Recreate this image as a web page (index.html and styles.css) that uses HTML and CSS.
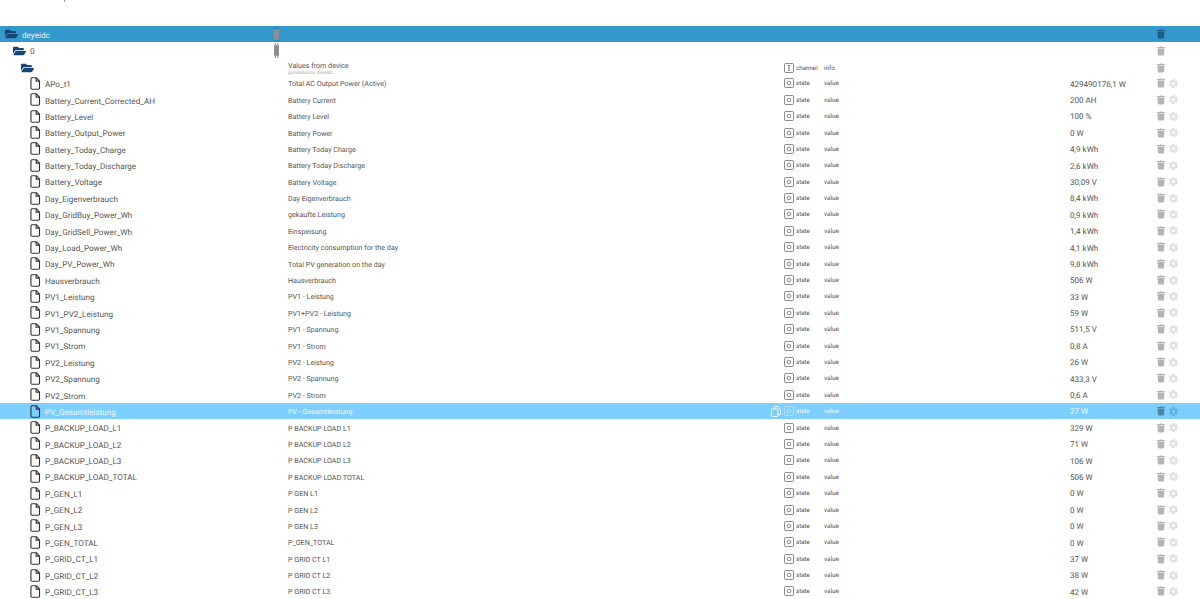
FILE: index.html
```html
<!DOCTYPE html>
<html lang="de">
<head>
<meta charset="utf-8">
<title>deyeidc objects</title>
<link rel="stylesheet" href="styles.css">
</head>
<body>
<svg class="defs" aria-hidden="true">
<symbol id="folder" viewBox="0 0 576 512"><path d="M572.694 292.093L500.27 416.248A63.997 63.997 0 0 1 444.989 448H45.025c-18.523 0-30.064-20.093-20.731-36.093l72.424-124.155A64 64 0 0 1 152 256h399.964c18.523 0 30.064 20.093 20.73 36.093zM152 224h328v-48c0-26.51-21.49-48-48-48H272l-64-64H48C21.49 64 0 85.49 0 112v278.046l69.077-118.418C86.214 242.25 117.989 224 152 224z"/></symbol>
<symbol id="file" viewBox="0 0 11 14"><path d="M1.800 .8h4.700L9.800 4.200V12a1.200 1.200 0 0 1-1.200 1.200H1.800A1.200 1.200 0 0 1 .6 12V2A1.200 1.200 0 0 1 1.800 .8zM6.200 1v3.400h3.400" fill="none" stroke="currentColor" stroke-width="1.200"/></symbol>
<symbol id="trash" viewBox="0 0 448 512"><path d="M432 32H312l-9.400-18.700A24 24 0 0 0 281.100 0H166.800a23.720 23.720 0 0 0-21.400 13.300L136 32H16A16 16 0 0 0 0 48v32a16 16 0 0 0 16 16h416a16 16 0 0 0 16-16V48a16 16 0 0 0-16-16zM53.200 467a48 48 0 0 0 47.900 45h245.800a48 48 0 0 0 47.900-45L416 128H32z"/></symbol>
<symbol id="gear" viewBox="0 0 24 24"><path fill-rule="evenodd" d="M19.400 13a7.600 7.600 0 0 0 0-2l2.100-1.600c.2-.2.2-.4.1-.6l-2-3.500c-.1-.2-.4-.3-.6-.2l-2.500 1a7.300 7.300 0 0 0-1.700-1l-.4-2.600a.5.5 0 0 0-.5-.4h-4a.5.5 0 0 0-.5.4l-.4 2.600c-.6.3-1.200.6-1.700 1l-2.500-1c-.2-.1-.5 0-.6.2l-2 3.500c-.1.2-.1.4.1.6L4.600 11a7.600 7.600 0 0 0 0 2l-2.100 1.600c-.2.2-.2.4-.1.6l2 3.500c.1.2.4.3.6.2l2.500-1c.5.4 1.100.7 1.700 1l.4 2.600c0 .2.3.4.5.4h4c.2 0 .5-.2.5-.4l.4-2.600c.6-.3 1.200-.6 1.700-1l2.500 1c.2.1.5 0 .6-.2l2-3.500c.1-.2.1-.4-.1-.6zM12 8.500a3.500 3.500 0 1 1 0 7 3.500 3.500 0 0 1 0-7z"/></symbol>
<symbol id="state" viewBox="0 0 11 11"><rect x=".5" y=".5" width="10" height="10" rx="1.500" fill="none" stroke="currentColor"/><circle cx="5.500" cy="5.500" r="2" fill="none" stroke="currentColor"/></symbol>
<symbol id="channel" viewBox="0 0 11 11"><rect x=".5" y=".5" width="10" height="10" rx="1.500" fill="none" stroke="currentColor"/><path d="M4.300 2.200h2.400v1.600H4.300zM4.800 4.600h1.400v4.200H4.800z" fill="currentColor"/></symbol>
<symbol id="pin" viewBox="0 0 7 15"><path d="M1 2.200h5v10.600H1z" fill="#8c9094"/><path d="M1.800 0h.7v2.200h-.7zM4.500 0h.7v2.200h-.7zM1.800 12.800h.7V15h-.7zM4.500 12.800h.7V15h-.7z" fill="#54585c"/></symbol>
<symbol id="copy" viewBox="0 0 11 12"><path d="M3.500 3V1.500a1 1 0 0 1 1-1h3L10.500 3.500V8.500a1 1 0 0 1-1 1H7.500M1.500 3H6.500a1 1 0 0 1 1 1V10.500a1 1 0 0 1-1 1H1.500a1 1 0 0 1-1-1V4a1 1 0 0 1 1-1z" fill="none" stroke="currentColor"/></symbol>
</svg>

<div class="topbar"><span class="speck"></span></div>

<main class="tree">
<div class="row root"><div class="name l0"><svg class="ic-folder"><use href="#folder"/></svg><span>deyeidc</span></div><svg class="ic-pin"><use href="#pin"/></svg><div class="desc"></div><div class="copy"></div><div class="type"></div><div class="role"></div><div class="val"></div><div class="acts"><svg class="ic-trash"><use href="#trash"/></svg></div></div>
<div class="row"><div class="name l1"><svg class="ic-folder"><use href="#folder"/></svg><span>0</span></div><svg class="ic-pin"><use href="#pin"/></svg><div class="desc"></div><div class="copy"></div><div class="type"></div><div class="role"></div><div class="val"></div><div class="acts"><svg class="ic-trash"><use href="#trash"/></svg></div></div>
<div class="row"><div class="name l2"><svg class="ic-folder"><use href="#folder"/></svg></div><span class="pin-gap"></span><div class="desc twoline"><span class="desc-main">Values from device</span><span class="desc-sub">generated by deyeidc</span></div><div class="copy"></div><div class="type"><svg class="ic-type"><use href="#channel"/></svg>channel</div><div class="role">info</div><div class="val"></div><div class="acts"><svg class="ic-trash"><use href="#trash"/></svg></div></div>

<div class="row"><div class="name"><svg class="ic-file"><use href="#file"/></svg><span>APo_t1</span></div><span class="pin-gap"></span><div class="desc">Total AC Output Power (Active)</div><div class="copy"></div><div class="type"><svg class="ic-type"><use href="#state"/></svg>state</div><div class="role">value</div><div class="val">429490176,1 W</div><div class="acts"><svg class="ic-trash"><use href="#trash"/></svg><svg class="ic-gear"><use href="#gear"/></svg></div></div>
<div class="row"><div class="name"><svg class="ic-file"><use href="#file"/></svg><span>Battery_Current_Corrected_AH</span></div><span class="pin-gap"></span><div class="desc">Battery Current</div><div class="copy"></div><div class="type"><svg class="ic-type"><use href="#state"/></svg>state</div><div class="role">value</div><div class="val">200 AH</div><div class="acts"><svg class="ic-trash"><use href="#trash"/></svg><svg class="ic-gear"><use href="#gear"/></svg></div></div>
<div class="row"><div class="name"><svg class="ic-file"><use href="#file"/></svg><span>Battery_Level</span></div><span class="pin-gap"></span><div class="desc">Battery Level</div><div class="copy"></div><div class="type"><svg class="ic-type"><use href="#state"/></svg>state</div><div class="role">value</div><div class="val">100 %</div><div class="acts"><svg class="ic-trash"><use href="#trash"/></svg><svg class="ic-gear"><use href="#gear"/></svg></div></div>
<div class="row"><div class="name"><svg class="ic-file"><use href="#file"/></svg><span>Battery_Output_Power</span></div><span class="pin-gap"></span><div class="desc">Battery Power</div><div class="copy"></div><div class="type"><svg class="ic-type"><use href="#state"/></svg>state</div><div class="role">value</div><div class="val">0 W</div><div class="acts"><svg class="ic-trash"><use href="#trash"/></svg><svg class="ic-gear"><use href="#gear"/></svg></div></div>
<div class="row"><div class="name"><svg class="ic-file"><use href="#file"/></svg><span>Battery_Today_Charge</span></div><span class="pin-gap"></span><div class="desc">Battery Today Charge</div><div class="copy"></div><div class="type"><svg class="ic-type"><use href="#state"/></svg>state</div><div class="role">value</div><div class="val">4,9 kWh</div><div class="acts"><svg class="ic-trash"><use href="#trash"/></svg><svg class="ic-gear"><use href="#gear"/></svg></div></div>
<div class="row"><div class="name"><svg class="ic-file"><use href="#file"/></svg><span>Battery_Today_Discharge</span></div><span class="pin-gap"></span><div class="desc">Battery Today Discharge</div><div class="copy"></div><div class="type"><svg class="ic-type"><use href="#state"/></svg>state</div><div class="role">value</div><div class="val">2,6 kWh</div><div class="acts"><svg class="ic-trash"><use href="#trash"/></svg><svg class="ic-gear"><use href="#gear"/></svg></div></div>
<div class="row"><div class="name"><svg class="ic-file"><use href="#file"/></svg><span>Battery_Voltage</span></div><span class="pin-gap"></span><div class="desc">Battery Voltage</div><div class="copy"></div><div class="type"><svg class="ic-type"><use href="#state"/></svg>state</div><div class="role">value</div><div class="val">30,09 V</div><div class="acts"><svg class="ic-trash"><use href="#trash"/></svg><svg class="ic-gear"><use href="#gear"/></svg></div></div>
<div class="row"><div class="name"><svg class="ic-file"><use href="#file"/></svg><span>Day_Eigenverbrauch</span></div><span class="pin-gap"></span><div class="desc">Day Eigenverbrauch</div><div class="copy"></div><div class="type"><svg class="ic-type"><use href="#state"/></svg>state</div><div class="role">value</div><div class="val">8,4 kWh</div><div class="acts"><svg class="ic-trash"><use href="#trash"/></svg><svg class="ic-gear"><use href="#gear"/></svg></div></div>
<div class="row"><div class="name"><svg class="ic-file"><use href="#file"/></svg><span>Day_GridBuy_Power_Wh</span></div><span class="pin-gap"></span><div class="desc">gekaufte Leistung</div><div class="copy"></div><div class="type"><svg class="ic-type"><use href="#state"/></svg>state</div><div class="role">value</div><div class="val">0,9 kWh</div><div class="acts"><svg class="ic-trash"><use href="#trash"/></svg><svg class="ic-gear"><use href="#gear"/></svg></div></div>
<div class="row"><div class="name"><svg class="ic-file"><use href="#file"/></svg><span>Day_GridSell_Power_Wh</span></div><span class="pin-gap"></span><div class="desc">Einspeisung</div><div class="copy"></div><div class="type"><svg class="ic-type"><use href="#state"/></svg>state</div><div class="role">value</div><div class="val">1,4 kWh</div><div class="acts"><svg class="ic-trash"><use href="#trash"/></svg><svg class="ic-gear"><use href="#gear"/></svg></div></div>
<div class="row"><div class="name"><svg class="ic-file"><use href="#file"/></svg><span>Day_Load_Power_Wh</span></div><span class="pin-gap"></span><div class="desc">Electricity consumption for the day</div><div class="copy"></div><div class="type"><svg class="ic-type"><use href="#state"/></svg>state</div><div class="role">value</div><div class="val">4,1 kWh</div><div class="acts"><svg class="ic-trash"><use href="#trash"/></svg><svg class="ic-gear"><use href="#gear"/></svg></div></div>
<div class="row"><div class="name"><svg class="ic-file"><use href="#file"/></svg><span>Day_PV_Power_Wh</span></div><span class="pin-gap"></span><div class="desc">Total PV generation on the day</div><div class="copy"></div><div class="type"><svg class="ic-type"><use href="#state"/></svg>state</div><div class="role">value</div><div class="val">9,8 kWh</div><div class="acts"><svg class="ic-trash"><use href="#trash"/></svg><svg class="ic-gear"><use href="#gear"/></svg></div></div>
<div class="row"><div class="name"><svg class="ic-file"><use href="#file"/></svg><span>Hausverbrauch</span></div><span class="pin-gap"></span><div class="desc">Hausverbrauch</div><div class="copy"></div><div class="type"><svg class="ic-type"><use href="#state"/></svg>state</div><div class="role">value</div><div class="val">506 W</div><div class="acts"><svg class="ic-trash"><use href="#trash"/></svg><svg class="ic-gear"><use href="#gear"/></svg></div></div>
<div class="row"><div class="name"><svg class="ic-file"><use href="#file"/></svg><span>PV1_Leistung</span></div><span class="pin-gap"></span><div class="desc">PV1 - Leistung</div><div class="copy"></div><div class="type"><svg class="ic-type"><use href="#state"/></svg>state</div><div class="role">value</div><div class="val">33 W</div><div class="acts"><svg class="ic-trash"><use href="#trash"/></svg><svg class="ic-gear"><use href="#gear"/></svg></div></div>
<div class="row"><div class="name"><svg class="ic-file"><use href="#file"/></svg><span>PV1_PV2_Leistung</span></div><span class="pin-gap"></span><div class="desc">PV1+PV2 - Leistung</div><div class="copy"></div><div class="type"><svg class="ic-type"><use href="#state"/></svg>state</div><div class="role">value</div><div class="val">59 W</div><div class="acts"><svg class="ic-trash"><use href="#trash"/></svg><svg class="ic-gear"><use href="#gear"/></svg></div></div>
<div class="row"><div class="name"><svg class="ic-file"><use href="#file"/></svg><span>PV1_Spannung</span></div><span class="pin-gap"></span><div class="desc">PV1 - Spannung</div><div class="copy"></div><div class="type"><svg class="ic-type"><use href="#state"/></svg>state</div><div class="role">value</div><div class="val">511,5 V</div><div class="acts"><svg class="ic-trash"><use href="#trash"/></svg><svg class="ic-gear"><use href="#gear"/></svg></div></div>
<div class="row"><div class="name"><svg class="ic-file"><use href="#file"/></svg><span>PV1_Strom</span></div><span class="pin-gap"></span><div class="desc">PV1 - Strom</div><div class="copy"></div><div class="type"><svg class="ic-type"><use href="#state"/></svg>state</div><div class="role">value</div><div class="val">0,8 A</div><div class="acts"><svg class="ic-trash"><use href="#trash"/></svg><svg class="ic-gear"><use href="#gear"/></svg></div></div>
<div class="row"><div class="name"><svg class="ic-file"><use href="#file"/></svg><span>PV2_Leistung</span></div><span class="pin-gap"></span><div class="desc">PV2 - Leistung</div><div class="copy"></div><div class="type"><svg class="ic-type"><use href="#state"/></svg>state</div><div class="role">value</div><div class="val">26 W</div><div class="acts"><svg class="ic-trash"><use href="#trash"/></svg><svg class="ic-gear"><use href="#gear"/></svg></div></div>
<div class="row"><div class="name"><svg class="ic-file"><use href="#file"/></svg><span>PV2_Spannung</span></div><span class="pin-gap"></span><div class="desc">PV2 - Spannung</div><div class="copy"></div><div class="type"><svg class="ic-type"><use href="#state"/></svg>state</div><div class="role">value</div><div class="val">433,3 V</div><div class="acts"><svg class="ic-trash"><use href="#trash"/></svg><svg class="ic-gear"><use href="#gear"/></svg></div></div>
<div class="row"><div class="name"><svg class="ic-file"><use href="#file"/></svg><span>PV2_Strom</span></div><span class="pin-gap"></span><div class="desc">PV2 - Strom</div><div class="copy"></div><div class="type"><svg class="ic-type"><use href="#state"/></svg>state</div><div class="role">value</div><div class="val">0,6 A</div><div class="acts"><svg class="ic-trash"><use href="#trash"/></svg><svg class="ic-gear"><use href="#gear"/></svg></div></div>
<div class="row hover"><div class="name"><svg class="ic-file"><use href="#file"/></svg><span>PV_Gesamtleistung</span></div><span class="pin-gap"></span><div class="desc">PV - Gesamtleistung</div><div class="copy"><svg class="ic-copy"><use href="#copy"/></svg></div><div class="type"><svg class="ic-type"><use href="#state"/></svg>state</div><div class="role">value</div><div class="val">27 W</div><div class="acts"><svg class="ic-trash"><use href="#trash"/></svg><svg class="ic-gear"><use href="#gear"/></svg></div></div>
<div class="row"><div class="name"><svg class="ic-file"><use href="#file"/></svg><span>P_BACKUP_LOAD_L1</span></div><span class="pin-gap"></span><div class="desc">P BACKUP LOAD L1</div><div class="copy"></div><div class="type"><svg class="ic-type"><use href="#state"/></svg>state</div><div class="role">value</div><div class="val">329 W</div><div class="acts"><svg class="ic-trash"><use href="#trash"/></svg><svg class="ic-gear"><use href="#gear"/></svg></div></div>
<div class="row"><div class="name"><svg class="ic-file"><use href="#file"/></svg><span>P_BACKUP_LOAD_L2</span></div><span class="pin-gap"></span><div class="desc">P BACKUP LOAD L2</div><div class="copy"></div><div class="type"><svg class="ic-type"><use href="#state"/></svg>state</div><div class="role">value</div><div class="val">71 W</div><div class="acts"><svg class="ic-trash"><use href="#trash"/></svg><svg class="ic-gear"><use href="#gear"/></svg></div></div>
<div class="row"><div class="name"><svg class="ic-file"><use href="#file"/></svg><span>P_BACKUP_LOAD_L3</span></div><span class="pin-gap"></span><div class="desc">P BACKUP LOAD L3</div><div class="copy"></div><div class="type"><svg class="ic-type"><use href="#state"/></svg>state</div><div class="role">value</div><div class="val">106 W</div><div class="acts"><svg class="ic-trash"><use href="#trash"/></svg><svg class="ic-gear"><use href="#gear"/></svg></div></div>
<div class="row"><div class="name"><svg class="ic-file"><use href="#file"/></svg><span>P_BACKUP_LOAD_TOTAL</span></div><span class="pin-gap"></span><div class="desc">P BACKUP LOAD TOTAL</div><div class="copy"></div><div class="type"><svg class="ic-type"><use href="#state"/></svg>state</div><div class="role">value</div><div class="val">506 W</div><div class="acts"><svg class="ic-trash"><use href="#trash"/></svg><svg class="ic-gear"><use href="#gear"/></svg></div></div>
<div class="row"><div class="name"><svg class="ic-file"><use href="#file"/></svg><span>P_GEN_L1</span></div><span class="pin-gap"></span><div class="desc">P GEN L1</div><div class="copy"></div><div class="type"><svg class="ic-type"><use href="#state"/></svg>state</div><div class="role">value</div><div class="val">0 W</div><div class="acts"><svg class="ic-trash"><use href="#trash"/></svg><svg class="ic-gear"><use href="#gear"/></svg></div></div>
<div class="row"><div class="name"><svg class="ic-file"><use href="#file"/></svg><span>P_GEN_L2</span></div><span class="pin-gap"></span><div class="desc">P GEN L2</div><div class="copy"></div><div class="type"><svg class="ic-type"><use href="#state"/></svg>state</div><div class="role">value</div><div class="val">0 W</div><div class="acts"><svg class="ic-trash"><use href="#trash"/></svg><svg class="ic-gear"><use href="#gear"/></svg></div></div>
<div class="row"><div class="name"><svg class="ic-file"><use href="#file"/></svg><span>P_GEN_L3</span></div><span class="pin-gap"></span><div class="desc">P GEN L3</div><div class="copy"></div><div class="type"><svg class="ic-type"><use href="#state"/></svg>state</div><div class="role">value</div><div class="val">0 W</div><div class="acts"><svg class="ic-trash"><use href="#trash"/></svg><svg class="ic-gear"><use href="#gear"/></svg></div></div>
<div class="row"><div class="name"><svg class="ic-file"><use href="#file"/></svg><span>P_GEN_TOTAL</span></div><span class="pin-gap"></span><div class="desc">P_GEN_TOTAL</div><div class="copy"></div><div class="type"><svg class="ic-type"><use href="#state"/></svg>state</div><div class="role">value</div><div class="val">0 W</div><div class="acts"><svg class="ic-trash"><use href="#trash"/></svg><svg class="ic-gear"><use href="#gear"/></svg></div></div>
<div class="row"><div class="name"><svg class="ic-file"><use href="#file"/></svg><span>P_GRID_CT_L1</span></div><span class="pin-gap"></span><div class="desc">P GRID CT L1</div><div class="copy"></div><div class="type"><svg class="ic-type"><use href="#state"/></svg>state</div><div class="role">value</div><div class="val">37 W</div><div class="acts"><svg class="ic-trash"><use href="#trash"/></svg><svg class="ic-gear"><use href="#gear"/></svg></div></div>
<div class="row"><div class="name"><svg class="ic-file"><use href="#file"/></svg><span>P_GRID_CT_L2</span></div><span class="pin-gap"></span><div class="desc">P GRID CT L2</div><div class="copy"></div><div class="type"><svg class="ic-type"><use href="#state"/></svg>state</div><div class="role">value</div><div class="val">38 W</div><div class="acts"><svg class="ic-trash"><use href="#trash"/></svg><svg class="ic-gear"><use href="#gear"/></svg></div></div>
<div class="row"><div class="name"><svg class="ic-file"><use href="#file"/></svg><span>P_GRID_CT_L3</span></div><span class="pin-gap"></span><div class="desc">P GRID CT L3</div><div class="copy"></div><div class="type"><svg class="ic-type"><use href="#state"/></svg>state</div><div class="role">value</div><div class="val">42 W</div><div class="acts"><svg class="ic-trash"><use href="#trash"/></svg><svg class="ic-gear"><use href="#gear"/></svg></div></div>
</main>
</body>
</html>
```
FILE: styles.css
```css
html, body {
  margin: 0;
  height: 599px;
  overflow: hidden;
  background: #fff;
}
body {
  font-family: Roboto, "Noto Sans", sans-serif;
  color: #333;
  text-rendering: geometricPrecision;
  -webkit-font-smoothing: antialiased;
}
.defs {
  display: none;
}
.topbar {
  height: 26px;
  padding-left: 64px;
}
.speck {
  display: block;
  width: 1px;
  height: 2px;
  background: #999;
}
.row {
  display: grid;
  grid-template-columns: 272px 16px 483px 13px 40px 246px 87px 1fr;
  align-items: center;
  height: 16.4px;
  font-size: 7.15px;
  color: #555;
}
.root {
  background: #3399cc;
  color: #e6f3fa;
}
.hover {
  background: #7dcfff;
  color: #eef8ff;
}
.name {
  display: flex;
  align-items: center;
  padding-left: 30px;
  font-size: 8.15px;
  white-space: nowrap;
}
.name span {
  padding-top: 1.5px;
}
.name.l0 { padding-left: 5px; }
.name.l1 { padding-left: 13px; }
.name.l2 { padding-left: 21px; }
.desc {
  padding-top: 1px;
}
.desc-main, .desc-sub { display: block; }
.desc.twoline { line-height: 8px; padding-top: 3px; }
.desc-main { font-size: 7.15px; }
.desc-sub { font-size: 4.8px; color: #aaa; }
.type {
  display: flex;
  align-items: center;
  gap: 2px;
  font-size: 6.2px;
}
.role {
  font-size: 6.4px;
}
.val {
  padding-top: 1.5px;
  font-size: 8.05px;
  white-space: nowrap;
}
.copy {
  display: flex;
  align-items: center;
}
.acts {
  display: flex;
  align-items: center;
  gap: 3px;
}
.ic-folder {
  width: 13px;
  height: 12px;
  margin-right: 4px;
  fill: #164477;
}
.ic-file {
  width: 11px;
  height: 13px;
  margin-right: 4px;
  color: #333;
}
.ic-pin {
  width: 7px;
  height: 15px;
  margin-left: 1px;
}
.ic-type {
  width: 10px;
  height: 10px;
  color: #7a7a7a;
}
.ic-trash {
  width: 8px;
  height: 10px;
  fill: #b4b4b4;
}
.ic-gear {
  width: 11px;
  height: 11px;
  fill: #dfdfdf;
}
.ic-copy {
  width: 10px;
  height: 11px;
  color: #fff;
}
.root .ic-trash { fill: #1d5c84; }
.hover .ic-trash { fill: #4f87ab; }
.hover .ic-gear { fill: #5fb0e0; }
.hover .ic-type { color: #b8e4ff; }
```
